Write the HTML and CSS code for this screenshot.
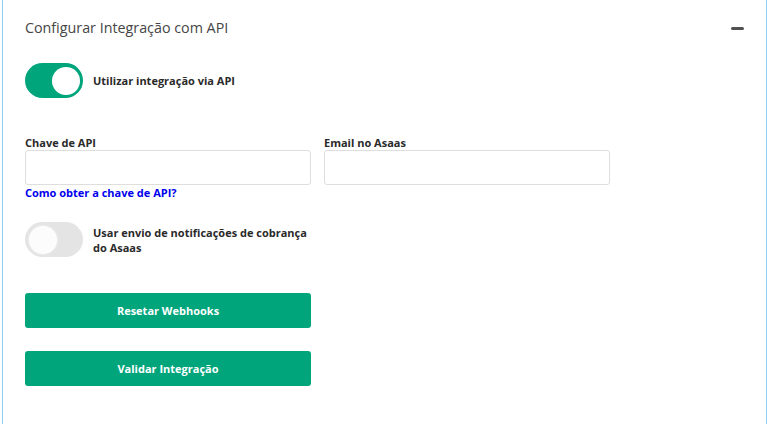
FILE: index.html
```html
<!DOCTYPE html>
<html lang="pt-BR">
<head>
<meta charset="utf-8">
<link rel="stylesheet" href="styles.css">
</head>
<body>
<section class="card">
  <header class="card-header">
    <h2 class="title">Configurar Integração com API</h2>
    <span class="collapse" aria-label="Recolher"></span>
  </header>
  <div class="card-body">
    <label class="switch-row first">
      <span class="switch on"><span class="knob"></span></span>
      <span class="switch-label">Utilizar integração via API</span>
    </label>

    <div class="fields">
      <div class="field">
        <label class="field-label">Chave de API</label>
        <input class="input" type="text">
        <a class="help-link" href="#">Como obter a chave de API?</a>
      </div>
      <div class="field">
        <label class="field-label">Email no Asaas</label>
        <input class="input" type="text">
      </div>
    </div>

    <label class="switch-row second">
      <span class="switch off"><span class="knob"></span></span>
      <span class="switch-label wrap">Usar envio de notificações de cobrança do Asaas</span>
    </label>

    <div class="actions">
      <button class="btn" type="button">Resetar Webhooks</button>
      <button class="btn" type="button">Validar Integração</button>
    </div>
  </div>
</section>
</body>
</html>
```
FILE: styles.css
```css
* { box-sizing: border-box; }
html, body { margin: 0; padding: 0; background: #fff; }
body {
  font-family: "Open Sans", "Noto Sans", sans-serif;
  color: #333;
  height: 424px;
  overflow: hidden;
}
.card {
  margin: 0 1px 0 2px;
  height: 424px;
  border-left: 1px solid #8ecff0;
  border-right: 1px solid #8ecff0;
  background: #fff;
}
.card-header {
  display: flex;
  align-items: center;
  justify-content: space-between;
  padding: 18px 22px 0 22px;
}
.title {
  margin: 0;
  font-size: 14.3px;
  line-height: 20px;
  font-weight: 400;
  color: #454545;
}
.collapse {
  display: block;
  width: 13px;
  height: 3px;
  border-radius: 2px;
  background: #505050;
}
.card-body {
  padding: 0 22px;
}
.switch-row {
  display: flex;
  align-items: center;
  gap: 10px;
}
.switch-row.first { margin-top: 25px; }
.switch-row.second { margin-top: 22px; }
.switch {
  position: relative;
  flex: none;
  width: 58px;
  height: 35px;
  border-radius: 18px;
}
.switch.on { background: #00a57b; }
.switch.off { background: #e4e4e4; }
.knob {
  position: absolute;
  top: 3.5px;
  width: 28px;
  height: 28px;
  border-radius: 50%;
  background: #fff;
}
.switch.on .knob { right: 3px; }
.switch.off .knob {
  left: 4px;
  background: #fcfcfc;
  box-shadow: 0 0 0 1px #ececec;
}
.switch-label {
  font-size: 11px;
  font-weight: 700;
  line-height: 15px;
  color: #2a2a2a;
}
.switch-label.wrap { max-width: 218px; }
.fields {
  display: flex;
  gap: 13px;
  margin-top: 37px;
}
.field {
  display: flex;
  flex-direction: column;
  width: 286px;
}
.field-label {
  font-size: 11px;
  font-weight: 700;
  line-height: 15px;
  color: #2a2a2a;
}
.input {
  width: 286px;
  height: 35px;
  border: 1px solid #dedede;
  border-radius: 3px;
  background: #fff;
  margin: 0;
  padding: 0 8px;
  font: inherit;
}
.help-link {
  font-size: 11px;
  font-weight: 700;
  line-height: 15px;
  color: #0000ee;
  text-decoration: none;
}
.actions {
  display: flex;
  flex-direction: column;
  gap: 23px;
  margin-top: 36px;
  width: 286px;
}
.btn {
  height: 35px;
  border: none;
  border-radius: 3px;
  background: #00a57b;
  color: #fff;
  font-family: "Open Sans", "Noto Sans", sans-serif;
  font-size: 11px;
  font-weight: 700;
  cursor: pointer;
}
```
